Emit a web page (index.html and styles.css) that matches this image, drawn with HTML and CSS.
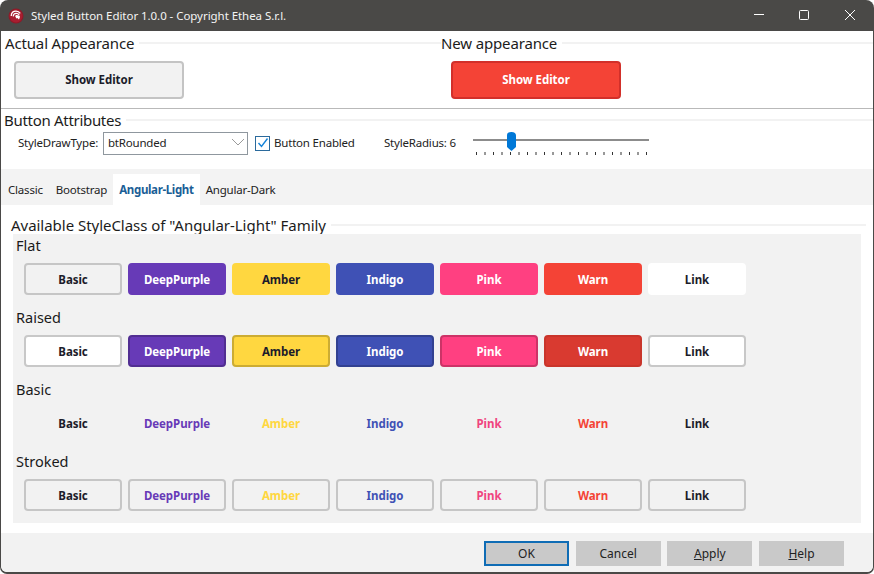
FILE: index.html
```html
<!DOCTYPE html>
<html lang="en">
<head>
<meta charset="utf-8">
<title>Styled Button Editor</title>
<link rel="stylesheet" href="styles.css">
</head>
<body>
<div class="window">
  <header class="titlebar">
    <svg class="logo" width="16" height="16" viewBox="0 0 16 16"><circle cx="8" cy="8" r="7.500" fill="#8e1a28"/><circle cx="8" cy="8" r="6.500" fill="#a81e30"/><path d="M3.200 8C3.400 5 5.400 3.200 8 3.200c1.800 0 3.300.8 4.200 2.200" stroke="#fff" stroke-width="1.300" fill="none"/><path d="M5.200 8.400c.1-1.800 1.300-3 3-3 1.200 0 2.300.5 3 1.500" stroke="#fff" stroke-width="1.200" fill="none"/><path d="M7.200 8.300c.2-.9.900-1.300 1.700-1.200l2.900.6c.3 1.400-.1 2.800-1 3.900L9.400 10l-1 .6z" fill="#fff"/></svg>
    <span class="title">Styled Button Editor 1.0.0 - Copyright Ethea S.r.l.</span>
    <div class="winctl">
      <svg width="12" height="12" viewBox="0 0 12 12"><path d="M2 5.500h10" stroke="#fff" fill="none"/></svg>
      <svg width="12" height="12" viewBox="0 0 12 12"><rect x="1.500" y="1.500" width="9" height="9" rx="1" stroke="#fff" fill="none"/></svg>
      <svg width="12" height="12" viewBox="0 0 12 12"><path d="M1 1l10 10M11 1L1 11" stroke="#fff" fill="none"/></svg>
    </div>
  </header>
  <main class="client">
    <section class="appearance">
      <div class="appearance-col col-actual">
        <div class="legend legend-a"><span>Actual Appearance</span><i></i></div>
        <button class="btn big big-actual">Show Editor</button>
      </div>
      <div class="appearance-col col-new">
        <div class="legend legend-a"><span>New appearance</span><i></i></div>
        <button class="btn big big-new">Show Editor</button>
      </div>
    </section>
    <section class="attrs">
      <div class="legend legend-b"><span>Button Attributes</span><i></i></div>
      <div class="attr-row">
        <label class="lbl-type">StyleDrawType:</label>
        <div class="combo"><span>btRounded</span>
          <svg width="14" height="8" viewBox="0 0 14 8"><path d="M1 1l6 6 6-6" stroke="#9a9a9a" fill="none"/></svg>
        </div>
        <span class="check"><svg width="12" height="12" viewBox="0 0 12 12"><path d="M1.500 6l3 3.500L10.500 1.500" stroke="#1583d8" stroke-width="1.400" fill="none"/></svg></span>
        <span class="lbl-enabled">Button Enabled</span>
        <span class="lbl-radius">StyleRadius: 6</span>
        <svg class="slider" width="178" height="26" viewBox="0 0 178 26">
          <rect x="0" y="7" width="176" height="2" fill="#8c8c8c"/>
          <path d="M3.500 20v3M12 20v3M20.500 20v3M29 20v3M37.500 20v3M46 20v3M54.500 20v3M63 20v3M71.500 20v3M80 20v3M88.500 20v3M97 20v3M105.500 20v3M114 20v3M122.500 20v3M131 20v3M139.500 20v3M148 20v3M156.500 20v3M165 20v3M173.500 20v3" stroke="#333" fill="none"/>
          <path d="M34 3.500a4.500 3.500 0 0 1 9 0V15l-4.500 4L34 15z" fill="#0078d7"/>
        </svg>
      </div>
    </section>
    <nav class="tabs">
      <span class="tab tab-first">Classic</span>
      <span class="tab">Bootstrap</span>
      <span class="tab active">Angular-Light</span>
      <span class="tab">Angular-Dark</span>
    </nav>
    <section class="family">
      <div class="legend legend-c"><span>Available StyleClass of "Angular-Light" Family</span><i></i></div>
      <div class="panel">
        <div class="group">
          <div class="group-label">Flat</div>
          <div class="btn-row">
            <button class="btn flat basic">Basic</button>
            <button class="btn flat purple">DeepPurple</button>
            <button class="btn flat amber">Amber</button>
            <button class="btn flat indigo">Indigo</button>
            <button class="btn flat pink">Pink</button>
            <button class="btn flat warn">Warn</button>
            <button class="btn flat link">Link</button>
          </div>
        </div>
        <div class="group">
          <div class="group-label">Raised</div>
          <div class="btn-row">
            <button class="btn raised basic">Basic</button>
            <button class="btn raised purple">DeepPurple</button>
            <button class="btn raised amber">Amber</button>
            <button class="btn raised indigo">Indigo</button>
            <button class="btn raised pink">Pink</button>
            <button class="btn raised warn">Warn</button>
            <button class="btn raised link">Link</button>
          </div>
        </div>
        <div class="group">
          <div class="group-label">Basic</div>
          <div class="btn-row">
            <button class="btn ghost t-basic">Basic</button>
            <button class="btn ghost t-purple">DeepPurple</button>
            <button class="btn ghost t-amber">Amber</button>
            <button class="btn ghost t-indigo">Indigo</button>
            <button class="btn ghost t-pink">Pink</button>
            <button class="btn ghost t-warn">Warn</button>
            <button class="btn ghost t-basic">Link</button>
          </div>
        </div>
        <div class="group">
          <div class="group-label">Stroked</div>
          <div class="btn-row">
            <button class="btn stroked t-basic">Basic</button>
            <button class="btn stroked t-purple">DeepPurple</button>
            <button class="btn stroked t-amber">Amber</button>
            <button class="btn stroked t-indigo">Indigo</button>
            <button class="btn stroked t-pink">Pink</button>
            <button class="btn stroked t-warn">Warn</button>
            <button class="btn stroked t-basic">Link</button>
          </div>
        </div>
      </div>
    </section>
    <footer class="footer">
      <button class="dlg default">OK</button>
      <button class="dlg">Cancel</button>
      <button class="dlg"><u>A</u>pply</button>
      <button class="dlg"><u>H</u>elp</button>
    </footer>
  </main>
</div>
</body>
</html>
```
FILE: styles.css
```css
* { box-sizing: border-box; }
html, body { margin: 0; padding: 0; background: #fff; }
body { width: 874px; height: 574px; overflow: hidden; font-family: "Noto Sans", "Open Sans", sans-serif; color: #1a1a1a; }
.window { width: 874px; height: 574px; display: flex; flex-direction: column; background: #4a4947; border-radius: 8px 8px 7px 7px; padding: 0 1px 2px 1px; }
.titlebar { height: 31px; flex: none; display: flex; align-items: center; padding-left: 7px; color: #f4f4f4; }
.logo { flex: none; }
.title { font-size: 11.500px; letter-spacing: -0.05px; margin-left: 7px; }
.winctl { margin-left: auto; display: flex; align-items: center; gap: 34px; padding-right: 17px; margin-top: -1px; }
.winctl svg { display: block; }
.client { flex: 1; min-height: 0; background: #fff; display: flex; flex-direction: column; border-radius: 0 0 6px 6px; overflow: hidden; }
.legend { display: flex; align-items: center; font-size: 15px; line-height: 20px; color: #1c1c1c; }
.legend span { white-space: nowrap; }
.legend i { flex: 1; height: 2px; background: #f2f2f2; margin-left: 5px; }
.appearance { height: 78px; flex: none; display: flex; border-bottom: 1px solid #b9b9b9; }
.appearance-col { display: flex; flex-direction: column; }
.col-actual { width: 440px; padding-top: 2px; padding-left: 4px; }
.col-new { flex: 1; padding-top: 2px; }
.legend-a { height: 20px; letter-spacing: -0.15px; }
.btn { display: block; font-family: inherit; font-weight: 700; font-size: 11.500px; letter-spacing: -0.05px; padding: 0; border: 2px solid transparent; border-radius: 4px; background: transparent; line-height: 16px; color: #1c1c2a; }
.big { width: 170px; height: 38px; margin-top: 8px; }
.big-actual { margin-left: 9px; background: #f2f2f2; border-color: #c4c4c4; }
.big-new { margin-left: 10px; background: #f44336; border-color: #d2302a; color: #fff; }
.attrs { height: 60px; flex: none; padding-top: 1px; padding-left: 3px; }
.legend-b { height: 20px; letter-spacing: -0.3px; }
.attr-row { display: flex; align-items: center; height: 24px; margin-top: 1px; font-size: 11.500px; letter-spacing: -0.2px; color: #222; }
.lbl-type { margin-left: 14px; width: 85px; white-space: nowrap; padding-bottom: 2px; }
.combo { width: 145px; height: 23px; border: 1px solid #8f979e; display: flex; align-items: center; justify-content: space-between; padding: 0 2px 2px 4px; background: #fff; }
.check { width: 15px; height: 15px; margin-left: 7px; border: 1px solid #2b6a9c; display: flex; align-items: center; justify-content: center; flex: none; }
.check svg { flex: none; }
.lbl-enabled { margin-left: 4px; width: 110px; white-space: nowrap; padding-bottom: 2px; }
.lbl-radius { width: 89px; white-space: nowrap; padding-bottom: 2px; }
.slider { flex: none; margin-top: 4px; }
.tabs { height: 36px; flex: none; background: #f3f3f3; display: flex; align-items: flex-end; padding-left: 1px; font-size: 11.500px; letter-spacing: -0.2px; color: #222; }
.tab { height: 31px; display: flex; align-items: center; padding: 0 6px; white-space: nowrap; }
.tab-first { padding-right: 7px; }
.tab.active { background: #fff; color: #1a5e96; font-weight: 700; letter-spacing: -0.35px; }
.family { height: 328px; flex: none; padding-top: 10px; background: #fff; display: flex; flex-direction: column; }
.legend-c { height: 20px; padding-left: 10px; padding-right: 7px; font-size: 15px; letter-spacing: -0.03px; }
.panel { margin: -1px 12px 10px 12px; flex: 1; background: #f2f2f2; padding-top: 1px; }
.group { height: 72px; }
.group-label { font-size: 14.500px; line-height: 20px; height: 28px; padding-left: 3px; }
.btn-row { display: flex; gap: 6px; padding-left: 11px; }
.btn-row .btn { width: 98px; height: 32px; padding-top: 1px; }
.flat.basic { background: #f2f2f2; border-color: #c6c6c6; }
.flat.purple { background: #673ab7; color: #fff; border-color: #673ab7; }
.flat.amber { background: #ffd740; border-color: #ffd740; }
.flat.indigo { background: #3f51b5; color: #fff; border-color: #3f51b5; }
.flat.pink { background: #ff4081; color: #fff; border-color: #ff4081; }
.flat.warn { background: #f44336; color: #fff; border-color: #f44336; }
.flat.link { background: #fff; border-color: #fff; }
.raised.basic { background: #fff; border-color: #c8c8c8; }
.raised.purple { background: #673ab7; color: #fff; border-color: #512e92; }
.raised.amber { background: #ffd740; border-color: #ccac33; }
.raised.indigo { background: #3f51b5; color: #fff; border-color: #324191; }
.raised.pink { background: #ff4081; color: #fff; border-color: #cc3367; }
.raised.warn { background: #d93a30; color: #fff; border-color: #c9352b; }
.raised.link { background: #fff; border-color: #c8c8c8; }
.stroked { border-color: #c6c6c6; background: #f2f2f2; }
.t-basic { color: #1c1c2a; }
.t-purple { color: #673ab7; }
.t-amber { color: #ffd740; }
.t-indigo { color: #3f51b5; }
.t-pink { color: #f0447f; }
.t-warn { color: #f44336; }
.footer { flex: 1; background: #f2f2f2; display: flex; align-items: flex-start; padding-top: 8px; padding-left: 483px; gap: 6.670px; }
.dlg { width: 85px; height: 25px; border: 0; padding: 0; background: #c9c9c9; font-family: inherit; font-size: 12px; color: #222; }
.dlg.default { border: 2px solid #0f6cb5; }
```
